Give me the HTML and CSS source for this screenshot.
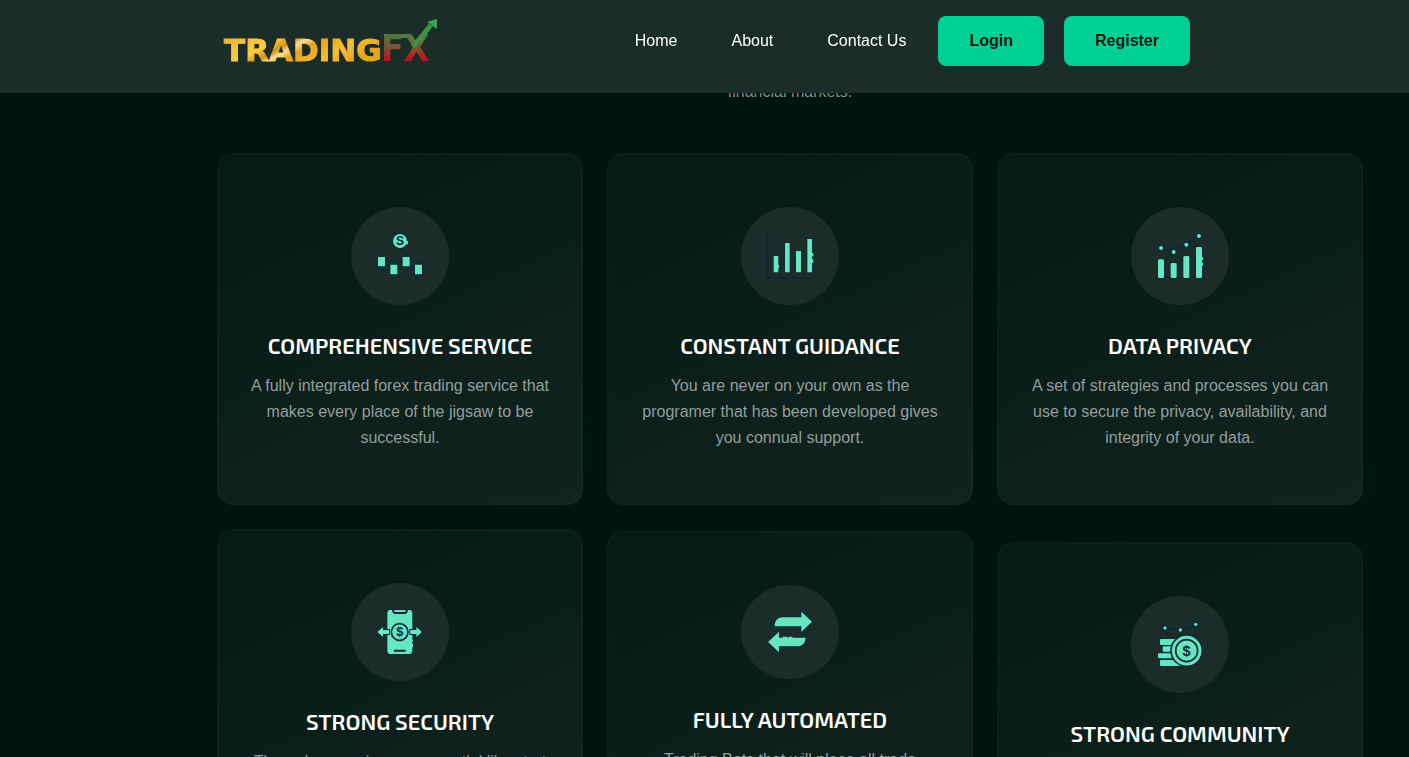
FILE: index.html
```html
<!DOCTYPE html>
<html lang="en">
<head>
<meta charset="utf-8">
<title>TradingFX</title>
<link rel="stylesheet" href="styles.css">
</head>
<body>
<header class="header">
  <a class="logo" href="#" aria-label="TradingFX">
    <svg width="220" height="50" viewBox="0 0 220 50">
      <defs>
        <linearGradient id="gold" x1="0" y1="0" x2="1" y2="0.4">
          <stop offset="0" stop-color="#e0a92c"/><stop offset="0.2" stop-color="#f6c33a"/><stop offset="0.36" stop-color="#fbcb42"/><stop offset="0.46" stop-color="#d09418"/><stop offset="0.52" stop-color="#fbe09a"/><stop offset="0.6" stop-color="#e3a21a"/><stop offset="0.8" stop-color="#f7be34"/><stop offset="1" stop-color="#e5a51f"/>
        </linearGradient>
        <linearGradient id="fx" gradientUnits="userSpaceOnUse" x1="0" y1="18" x2="0" y2="46">
          <stop offset="0" stop-color="#4f7a3e"/><stop offset="0.5" stop-color="#80512f"/><stop offset="0.85" stop-color="#c01520"/><stop offset="1" stop-color="#c8101e"/>
        </linearGradient>
      </defs>
      <text class="logo-main" x="6" y="45" fill="url(#gold)" stroke="url(#gold)">TRADING</text>
      <text class="logo-fx" x="163" y="45" fill="url(#fx)">FX</text>
      <path d="M182 20H192L198 28" stroke="#557940" stroke-width="4" fill="none"/>
      <path d="M195 31L213 9" stroke="#3b9347" stroke-width="5" fill="none"/>
      <path d="M209 6L219 3L219 13Z" fill="#36a852"/>
    </svg>
  </a>
  <nav class="nav">
    <a class="nav-link" href="#">Home</a>
    <a class="nav-link" href="#">About</a>
    <a class="nav-link" href="#">Contact Us</a>
  </nav>
  <div class="actions">
    <button class="btn" type="button">Login</button>
    <button class="btn" type="button">Register</button>
  </div>
</header>
<main class="services">
  <p class="intro">financial markets.</p>
  <div class="columns">
    <div class="column">
      <article class="card">
        <svg class="icon" viewBox="33 36 294 294" width="98" height="98">
          <g class="line"><path d="M125 172V230M162 196V254M199 172V230M235 196V254"/></g>
          <g class="shape"><circle cx="180" cy="138" r="21"/><path d="M114 186h21v28h-21zM151 209h21v29h-21zM188 186h21v28h-21zM225 209h21v29h-21z"/></g>
          <path class="fill" d="M197 138h7v10h-7z"/>
          <text class="dollar" x="180" y="151" font-size="36">S</text>
        </svg>
        <h3 class="title">COMPREHENSIVE SERVICE</h3>
        <p class="text">A fully integrated forex trading service that makes every place of the jigsaw to be successful.</p>
      </article>
      <article class="card">
        <svg class="icon" viewBox="33 24 294 294" width="98" height="98">
          <g class="shape"><rect x="142" y="105" width="75" height="132" rx="9"/><path d="M112 171l17-15v9h18v12h-18v9zM246 171l-17-15v9h-18v12h18v9z"/></g>
          <g class="line"><path d="M159 104q1 10 7 10h28q6 0 7-10M162 227h35"/></g>
          <circle class="ring" cx="179" cy="171" r="25"/>
          <text class="dollar" x="179" y="184" font-size="38">$</text>
          <path class="fill" d="M214 194h5v5h-5zM214 206h5v11h-5z"/>
        </svg>
        <h3 class="title">STRONG SECURITY</h3>
        <p class="text">Through screening are essential like start up companies and growing teams.</p>
      </article>
    </div>
    <div class="column column-mid">
      <article class="card">
        <svg class="icon" viewBox="33 36 294 294" width="98" height="98">
          <g class="line"><path d="M112 113V249H249"/></g>
          <g class="shape"><path d="M131 183h14v49h-14zM165 144h14v88h-14zM198 168h15v64h-15zM232 132h14v100h-14z"/></g>
          <path class="fill" d="M143 210h4v9h-4zM244 174h6v10h-6zM244 193h6v10h-6z"/>
        </svg>
        <h3 class="title">CONSTANT GUIDANCE</h3>
        <p class="text">You are never on your own as the programer that has been developed gives you connual support.</p>
      </article>
      <article class="card">
        <svg class="icon" viewBox="33 30 294 282" width="98" height="94">
          <g class="shape"><path d="M134 154C134 136 144 127 158 127H214V110L246 140L214 171V154ZM227 188C226 205 216 214 202 214H147V232L114 201L147 170V188Z"/></g>
          <path class="fill" d="M158 185h14v6h-14zM176 185h11v6h-11z"/>
        </svg>
        <h3 class="title">FULLY AUTOMATED</h3>
        <p class="text">Trading Bots that will place all trade automatically on your behalf.</p>
      </article>
    </div>
    <div class="column column-last">
      <article class="card">
        <svg class="icon" viewBox="33 36 294 294" width="98" height="98">
          <g class="line"><path d="M123 159L161 171L199 149L237 123"/></g>
          <g class="shape"><rect x="114" y="193" width="18" height="56" rx="4"/><rect x="152" y="204" width="18" height="45" rx="4"/><rect x="190" y="183" width="18" height="66" rx="4"/><rect x="228" y="156" width="18" height="93" rx="4"/><circle cx="123" cy="159" r="6"/><circle cx="161" cy="171" r="6"/><circle cx="199" cy="149" r="6"/><circle cx="237" cy="123" r="6"/></g>
          <path class="fill" d="M243 186h6v9h-6zM243 203h6v9h-6z"/>
        </svg>
        <h3 class="title">DATA PRIVACY</h3>
        <p class="text">A set of strategies and processes you can use to secure the privacy, availability, and integrity of your data.</p>
      </article>
      <article class="card">
        <svg class="icon" viewBox="33 33 294 291" width="98" height="97">
          <g class="line"><path d="M111 143L135 129L181 135L227 118L250 113"/></g>
          <g class="shape"><rect x="120" y="162" width="60" height="18" rx="3"/><rect x="128" y="184" width="50" height="16" rx="3"/><rect x="114" y="205" width="60" height="15" rx="3"/><rect x="120" y="225" width="70" height="18" rx="3"/><circle cx="135" cy="129" r="5"/><circle cx="181" cy="135" r="5"/><circle cx="227" cy="118" r="5"/></g>
          <circle class="ring" cx="200" cy="197" r="47"/>
          <circle class="ring" cx="200" cy="197" r="33"/>
          <text class="dollar" x="200" y="212" font-size="44">$</text>
        </svg>
        <h3 class="title">STRONG COMMUNITY</h3>
        <p class="text">A community of traders who share their knowledge.</p>
      </article>
    </div>
  </div>
</main>
</body>
</html>
```

FILE: styles.css
```css
* { box-sizing: border-box; }

body {
  margin: 0;
  height: 100vh;
  overflow: hidden;
  background: #00150f;
  color: #fff;
  font: 16px/26px "Liberation Sans", Arial, sans-serif;
}

.header {
  position: fixed;
  inset: 0 0 auto;
  z-index: 1;
  display: flex;
  align-items: flex-start;
  padding: 16px 219px 27px 218px;
  background: #1c2d29;
  box-shadow: 0 1px 4px rgba(0, 0, 0, 0.4);
}

.logo { display: block; height: 50px; }
.logo svg { display: block; }
.logo-main { font: bold 31px "DejaVu Sans", sans-serif; stroke-width: 1; }
.logo-fx { font: bold 37px "DejaVu Sans Condensed", "DejaVu Sans", sans-serif; }

.nav {
  display: flex;
  gap: 54px;
  margin-left: auto;
  padding-right: 32px;
}
.nav-link { line-height: 50px; color: #fff; text-decoration: none; }

.actions { display: flex; gap: 20px; }
.btn {
  height: 50px;
  padding: 0 31px;
  border: 0;
  border-radius: 8px;
  background: #00d094;
  color: #00150f;
  font: bold 16px "Liberation Sans", Arial, sans-serif;
}

.services { padding: 79px 46px 0 217px; }
.intro { margin: 0 0 48px; text-align: center; color: #949e9b; }

.columns {
  display: grid;
  grid-template-columns: repeat(3, 1fr);
  gap: 24px;
  align-items: start;
}
.column { display: flex; flex-direction: column; gap: 24px; }
.column-mid { gap: 26px; }
.column-last { gap: 37px; }

.card {
  padding: 52px 28px;
  border: 2px solid rgba(255, 255, 255, 0.02);
  border-radius: 16px;
  background: linear-gradient(155deg, #041a14, #132420) border-box;
  text-align: center;
}
.title {
  margin: 24px 0 12px;
  font: 600 22px/32px "Exo 2", Roboto, "Open Sans", sans-serif;
}
.text { margin: 0; color: #949e9b; }

.icon { display: block; margin: 0 auto; border-radius: 50%; background: #1c2d29; }
.shape { fill: #66e6bf; stroke: #0a283a; stroke-width: 6; paint-order: stroke; }
.line { fill: none; stroke: #0a283a; stroke-width: 6; }
.fill { fill: #66e6bf; }
.ring { fill: #66e6bf; stroke: #0a283a; stroke-width: 5; }
.dollar { fill: #0a283a; font-family: "Liberation Sans", sans-serif; font-weight: bold; text-anchor: middle; }
```
